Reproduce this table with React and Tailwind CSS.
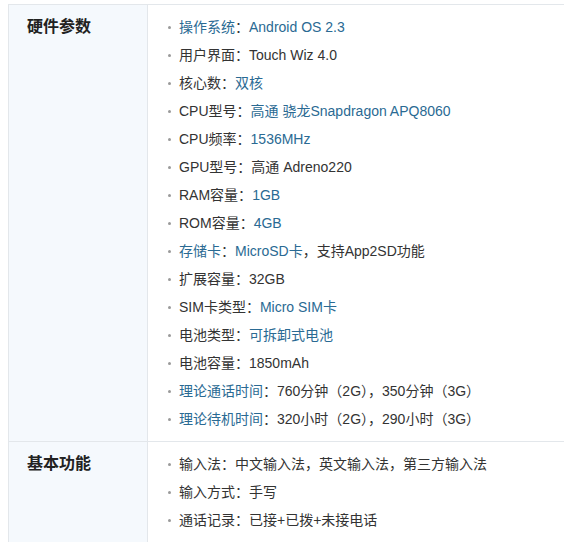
const BLUE = 'text-[#2a6a93]'

const hardware = [
  [['操作系统', true], ['：'], ['Android OS 2.3', true]],
  [['用户界面：Touch Wiz 4.0']],
  [['核心数：'], ['双核', true]],
  [['CPU型号：'], ['高通 骁龙Snapdragon APQ8060', true]],
  [['CPU频率：'], ['1536MHz', true]],
  [['GPU型号：高通 Adreno220']],
  [['RAM容量：'], ['1GB', true]],
  [['ROM容量：'], ['4GB', true]],
  [['存储卡', true], ['：'], ['MicroSD卡', true], ['，支持App2SD功能']],
  [['扩展容量：32GB']],
  [['SIM卡类型：'], ['Micro SIM卡', true]],
  [['电池类型：'], ['可拆卸式电池', true]],
  [['电池容量：1850mAh']],
  [['理论通话时间', true], ['：760分钟（2G），350分钟（3G）']],
  [['理论待机时间', true], ['：320小时（2G），290小时（3G）']],
]

const basic = [
  [['输入法：中文输入法，英文输入法，第三方输入法']],
  [['输入方式：手写']],
  [['通话记录：已接+已拨+未接电话']],
]

function Section({ title, items, last }) {
  return (
    <div className={`flex ${last ? '' : 'border-b border-[#e3e7eb]'}`}>
      <div className="w-[139px] shrink-0 bg-[#f5f9fd] border-r border-[#e3e7eb] pl-[18px] py-2">
        <div className="leading-[28px] text-[16px] font-bold text-[#222]">{title}</div>
      </div>
      <ul className="py-2 pl-[20px]">
        {items.map((parts, i) => (
          <li key={i} className="flex items-center leading-[28px] h-[28px] whitespace-nowrap">
            <span className="w-[3px] h-[3px] rounded-full bg-[#9a9a9a] mr-[8px]" />
            <span>
              {parts.map(([t, link], j) => (
                <span key={j} className={link ? BLUE : 'text-[#333]'}>{t}</span>
              ))}
            </span>
          </li>
        ))}
      </ul>
    </div>
  )
}

export default function App() {
  return (
    <div className="w-[564px] h-[542px] overflow-hidden bg-white pt-[4px] pl-[8px] text-[14px] font-['Liberation_Sans','Noto_Sans_CJK_SC',sans-serif]">
      <div className="w-[620px] border-t border-l border-[#e3e7eb]">
        <Section title="硬件参数" items={hardware} />
        <Section title="基本功能" items={basic} last />
      </div>
    </div>
  )
}
